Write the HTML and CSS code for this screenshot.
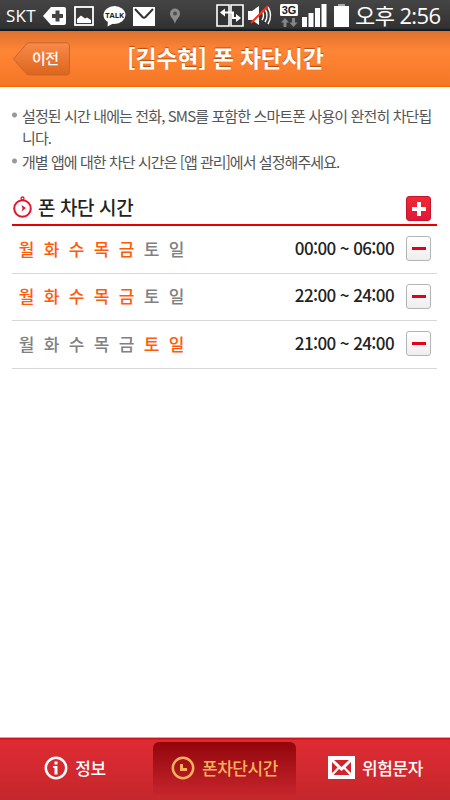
FILE: index.html
```html
<!DOCTYPE html>
<html lang="ko">
<head>
  <meta charset="UTF-8" />
  <title>폰 차단시간</title>
  <link rel="stylesheet" href="styles.css">
</head>
<body>
  <div class="status-bar">
    <span class="carrier">SKT</span>
    <svg class="status-icons" width="142" height="31" viewBox="0 0 142 31">
      <!-- plus tag -->
      <path d="M-1 16 L7 7 H20 Q22 7 22 9 V23 Q22 25 20 25 H7 Z" fill="#fff"/>
      <path d="M13.500 10.500 V21.500 M8 16 H19" stroke="#444" stroke-width="4"/>
      <!-- gallery -->
      <rect x="31" y="7" width="18" height="18" fill="#3a3a3a" stroke="#fff" stroke-width="1.800"/>
      <path d="M33 23 V19 L37 15.500 L41 18.500 L43 17.500 L47 20 V23 Z" fill="#fff"/>
      <!-- talk -->
      <ellipse cx="70.500" cy="15" rx="11" ry="9" fill="#fff"/>
      <path d="M64 20 L63.500 26.500 L72 22 Z" fill="#fff"/>
      <text x="70.500" y="17.500" class="talk-label">TALK</text>
      <!-- mail -->
      <rect x="89" y="7" width="22" height="19" fill="#fff"/>
      <path d="M91 9 L98.500 17 Q100 18.500 101.500 17 L109 9" fill="none" stroke="#333" stroke-width="2"/>
      <!-- pin -->
      <path d="M131 24 C130 19 126 17.500 126 13.500 A5 5 0 0 1 136 13.500 C136 17.500 132 19 131 24 Z" fill="#8c8c8c"/>
      <circle cx="131" cy="13.500" r="2" fill="#505050"/>
    </svg>
    <svg class="signal-icons" width="134" height="31" viewBox="0 0 134 31">
      <!-- data transfer -->
      <path d="M1 5 H13 V26 H1 Z M15 5 H27 V26 H15 Z" fill="#333" stroke="#fff" stroke-width="1.600"/>
      <path d="M8 12.500 H17 V18 H21" fill="none" stroke="#fff" stroke-width="2"/>
      <path d="M4 12.500 L9 8.500 V16.500 Z M25 18 L20 14 V22 Z" fill="#fff"/>
      <!-- muted speaker -->
      <path d="M32 11 H36 L43 6 V25 L36 20 H32 Z" fill="#fff"/>
      <path d="M46 11 Q49 15.500 46 20 M49 9 Q53 15.500 49 22 M52 7 Q57 15.500 52 24" fill="none" stroke="#fff" stroke-width="1.500"/>
      <path d="M35 23 L52 6" stroke="#f3321d" stroke-width="2"/>
      <!-- network -->
      <rect x="64" y="4" width="18" height="12" rx="1.500" fill="#fff"/>
      <text x="73" y="14" class="net-label">3G</text>
      <path d="M69 18 L73 22.500 H70.500 V27 H67.500 V22.500 H65 Z M77.500 27 L81.500 22.500 H79 V18 H76 V22.500 H73.500 Z" fill="#858585"/>
      <path d="M86 17 H91 V27 H86 Z M92.500 13 H97.500 V27 H92.500 Z M99 8 H104 V27 H99 Z M105.500 4 H110.500 V27 H105.500 Z" fill="#fff"/>
      <!-- battery -->
      <rect x="122" y="4" width="7" height="3" fill="#aaa"/>
      <rect x="118" y="6" width="15" height="21" fill="#fff"/>
    </svg>
    <span class="clock">오후 2:56</span>
  </div>

  <div class="header">
    <div class="back">
      <svg class="back-shape" width="58" height="34" viewBox="0 0 58 34">
        <defs>
          <linearGradient id="backFill" x1="0" y1="0" x2="0" y2="1">
            <stop offset="0" stop-color="#f98a4a"/>
            <stop offset="1" stop-color="#dc651c"/>
          </linearGradient>
        </defs>
        <path d="M0.500 17 L13 2.500 Q14.500 .8 17 .8 H53.500 Q56.500 .8 56.500 4 V30 Q56.500 33 53.500 33 H17 Q14.500 33 13 31.500 Z" fill="url(#backFill)" stroke="#c9662d"/>
      </svg>
      <span class="back-label">이전</span>
    </div>
    <h1 class="title">[김수현] 폰 차단시간</h1>
  </div>

  <div class="content">
    <ul class="notes">
      <li>설정된 시간 내에는 전화, SMS를 포함한 스마트폰 사용이 완전히 차단됩<br>니다.</li>
      <li class="second">개별 앱에 대한 차단 시간은 [앱 관리]에서 설정해주세요.</li>
    </ul>

    <div class="section-head">
      <svg class="timer" width="21" height="22" viewBox="0 0 21 22">
        <circle cx="10.500" cy="12.500" r="8.300" fill="none" stroke="#e2142d" stroke-width="2"/>
        <circle cx="10.500" cy="2.500" r="1.500" fill="none" stroke="#e2142d" stroke-width="1.300"/>
        <path d="M9.500 9 L14 12 L9.500 15.500 L10.500 12.500 Z" fill="#e2142d"/>
      </svg>
      <h2>폰 차단 시간</h2>
      <span class="btn add"></span>
    </div>

    <div class="row">
      <div class="days"><b>월</b><b>화</b><b>수</b><b>목</b><b>금</b><i>토</i><i>일</i></div>
      <span class="time">00:00 ~ 06:00</span>
      <span class="btn remove"></span>
    </div>
    <div class="row">
      <div class="days"><b>월</b><b>화</b><b>수</b><b>목</b><b>금</b><i>토</i><i>일</i></div>
      <span class="time">22:00 ~ 24:00</span>
      <span class="btn remove"></span>
    </div>
    <div class="row">
      <div class="days"><i>월</i><i>화</i><i>수</i><i>목</i><i>금</i><b>토</b><b>일</b></div>
      <span class="time">21:00 ~ 24:00</span>
      <span class="btn remove"></span>
    </div>
  </div>

  <div class="tabs">
    <div class="tab">
      <svg width="24" height="24" viewBox="0 0 24 24">
        <circle cx="12" cy="12" r="10.200" fill="none" stroke="#fff" stroke-width="2.500"/>
        <path d="M10.500 5.500 H13.500 V8.500 H10.500 Z M9 10 H13.500 V18.500 H10.500 V12 H9 Z" fill="#fff"/>
      </svg>
      <span>정보</span>
    </div>
    <div class="tab active">
      <svg width="24" height="24" viewBox="0 0 24 24">
        <circle cx="12" cy="12" r="10.200" fill="none" stroke="#fbb05f" stroke-width="2.500"/>
        <path d="M10.500 8 V13.500 H16" fill="none" stroke="#fbb05f" stroke-width="3"/>
      </svg>
      <span>폰차단시간</span>
    </div>
    <div class="tab sms">
      <svg width="27" height="23" viewBox="0 0 27 23">
        <rect width="27" height="23" fill="#fff"/>
        <path d="M6 4 H21 L13.500 11 Z M4 6 L9.500 11.500 L4 17 Z M23 6 L17.500 11.500 L23 17 Z M5.500 19 L11 13 L13.500 15 L16 13 L21.500 19 Z" fill="#d2232c"/>
      </svg>
      <span>위험문자</span>
    </div>
  </div>
</body>
</html>
```
FILE: styles.css
```css
* {
  box-sizing: border-box;
}

body {
  margin: 0;
  height: 800px;
  display: flex;
  flex-direction: column;
  background: #fff;
  font-family: "Noto Sans CJK KR", sans-serif;
  overflow: hidden;
}

svg {
  display: block;
  flex: none;
  overflow: visible;
}

.status-bar {
  height: 31px;
  display: flex;
  align-items: center;
  background: linear-gradient(#454545, #323232 90%, #10181f 97%);
  color: #fff;
  white-space: nowrap;
}

.carrier {
  width: 44px;
  padding-left: 6px;
  font: 17px/31px "Open Sans", sans-serif;
  letter-spacing: 0.3px;
}

.signal-icons {
  margin-left: 30px;
}

.talk-label {
  font: bold 7.5px "Open Sans", sans-serif;
  text-anchor: middle;
  fill: #222;
}

.net-label {
  font: bold 11px "Liberation Sans", sans-serif;
  text-anchor: middle;
  fill: #222;
}

.clock {
  margin-left: 5px;
  font-family: "Open Sans", "Noto Sans CJK KR", sans-serif;
  font-size: 22px;
  line-height: 29px;
  letter-spacing: -0.6px;
}

.header {
  height: 56px;
  display: flex;
  align-items: center;
  background: linear-gradient(#dc712e, #ff8536 35%, #f47725 97%, #f06a00 98%);
  color: #fff;
}

.back {
  display: grid;
  margin-left: 13px;
}

.back-shape,
.back-label {
  grid-area: 1 / 1;
}

.back-label {
  padding-left: 19px;
  font-size: 15px;
  line-height: 31px;
  font-weight: 500;
  letter-spacing: -0.5px;
}

.title {
  margin: 0 0 4px 56px;
  font-size: 23px;
  line-height: 40px;
  font-weight: 700;
  letter-spacing: -0.25px;
  text-shadow: 0 -1px 1px #b94d0e;
  white-space: nowrap;
}

.content {
  flex: 1;
  padding: 18px 13px 0 12px;
}

.notes {
  margin: 0;
  padding: 0;
  list-style: none;
  color: #555;
  font-size: 15px;
  line-height: 22px;
  letter-spacing: -0.88px;
  white-space: nowrap;
}

.notes li {
  display: flow-root;
  padding-left: 10px;
  background: radial-gradient(circle at 2.5px 10px, #999 2px, transparent 3px);
}

.notes .second {
  margin-top: 2px;
  letter-spacing: -0.94px;
}

.section-head {
  height: 53px;
  display: flex;
  align-items: flex-end;
  border-bottom: 2px solid #e60000;
}

.section-head h2 {
  flex: 1;
  margin: 0 0 3px 5px;
  font-size: 19px;
  line-height: 28px;
  font-weight: 500;
  letter-spacing: -0.4px;
  color: #222;
}

.timer {
  margin-bottom: 6px;
}

.btn {
  width: 25px;
  height: 25px;
  margin-right: 6px;
  border-radius: 3px;
  background-repeat: no-repeat;
  background-position: center;
}

.add {
  margin-bottom: 3px;
  border: 1px solid #c8142a;
  background-image: linear-gradient(#fff, #fff), linear-gradient(#fff, #fff), linear-gradient(#ee2b31, #e2153a);
  background-size: 14px 4px, 4px 14px, 100% 100%;
}

.remove {
  border: 1px solid #b4b4b4;
  background-image: linear-gradient(#e2001a, #e2001a), linear-gradient(#fff, #eee);
  background-size: 14px 3px, 100% 100%;
}

.row {
  height: 47.5px;
  display: flex;
  align-items: center;
  padding-bottom: 1px;
  border-bottom: 1.5px solid #d8d8d8;
}

.days {
  flex: 1;
  display: flex;
  padding-left: 2px;
  font-size: 17px;
  line-height: 26px;
}

.days b,
.days i {
  width: 25px;
  text-align: center;
  font-style: normal;
  font-weight: 500;
  color: #808080;
}

.days b {
  color: #ff5a0a;
}

.time {
  margin: 0 12px 2px 0;
  font-size: 17px;
  line-height: 26px;
  font-weight: 500;
  letter-spacing: -0.6px;
  color: #222;
}

.tabs {
  height: 63px;
  display: grid;
  grid-template-columns: 153px 143px 154px;
  padding-top: 5px;
  background: linear-gradient(#e7a0a0 1px, #c9141c 1px, #c9141c 2px, #df2b33 3px, #c4272c);
  color: #fff;
}

.tab {
  display: flex;
  align-items: center;
  justify-content: center;
  gap: 7px;
  height: 53px;
  padding-bottom: 2px;
  font-size: 17px;
  line-height: 26px;
  font-weight: 500;
  letter-spacing: -0.4px;
  white-space: nowrap;
}

.tab:first-child {
  padding-right: 3px;
}

.sms {
  padding-left: 5px;
}

.active {
  border-radius: 6px 6px 0 0;
  background: linear-gradient(#92060c, #c5252b);
  color: #fbb05f;
}
```
